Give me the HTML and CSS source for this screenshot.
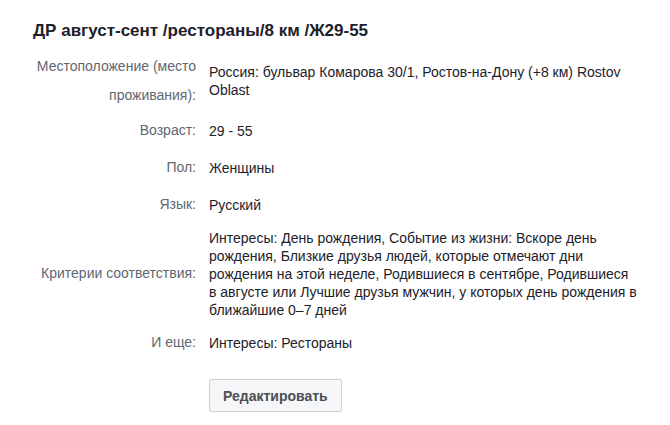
FILE: index.html
```html
<!DOCTYPE html>
<html lang="ru">
<head>
<meta charset="utf-8">
<link rel="stylesheet" href="styles.css">
</head>
<body>
<div class="panel">
  <h1 class="title">ДР август-сент /рестораны/8 км /Ж29-55</h1>
  <div class="rows">
    <div class="row row-tight">
      <div class="label">Местоположение (место проживания):</div>
      <div class="value">Россия: бульвар Комарова 30/1, Ростов-на-Дону (+8 км) Rostov Oblast</div>
    </div>
    <div class="row">
      <div class="label">Возраст:</div>
      <div class="value">29 - 55</div>
    </div>
    <div class="row">
      <div class="label">Пол:</div>
      <div class="value">Женщины</div>
    </div>
    <div class="row">
      <div class="label">Язык:</div>
      <div class="value">Русский</div>
    </div>
    <div class="row">
      <div class="label">Критерии соответствия:</div>
      <div class="value">Интересы: День рождения, Событие из жизни: Вскоре день рождения, Близкие друзья людей, которые отмечают дни рождения на этой неделе, Родившиеся в сентябре, Родившиеся в&nbsp;августе или Лучшие друзья мужчин, у которых день рождения в ближайшие 0–7 дней</div>
    </div>
    <div class="row">
      <div class="label">И еще:</div>
      <div class="value">Интересы: Рестораны</div>
    </div>
  </div>
  <div class="actions">
    <button class="btn">Редактировать</button>
  </div>
</div>
</body>
</html>
```
FILE: styles.css
```css
html, body {
  margin: 0;
  padding: 0;
  background: #ffffff;
}
body {
  font-family: "Liberation Sans", Arial, sans-serif;
  color: #1d2129;
}
.panel {
  padding: 21px 0 0 33px;
}
.title {
  margin: 0;
  font-size: 17px;
  font-weight: bold;
  line-height: 20px;
  color: #1d2129;
}
.rows {
  margin-top: 9px;
  display: flex;
  flex-direction: column;
}
.row {
  display: grid;
  grid-template-columns: 163px 432px;
  column-gap: 13px;
  align-items: center;
  padding: 4px 0;
}
.row-tight {
  padding: 2px 0;
}
.label {
  text-align: right;
  font-size: 14px;
  line-height: 29px;
  color: #606770;
}
.value {
  font-size: 14px;
  line-height: 18px;
  padding: 1.5px 0;
  color: #1d2129;
}
.actions {
  margin-top: 18px;
  padding-left: 176px;
}
.btn {
  font-family: "Liberation Sans", Arial, sans-serif;
  font-size: 14px;
  font-weight: bold;
  color: #4b4f56;
  background: #f5f6f7;
  border: 1px solid #ccd0d5;
  border-radius: 2px;
  height: 33px;
  padding: 0 13px;
}
```
